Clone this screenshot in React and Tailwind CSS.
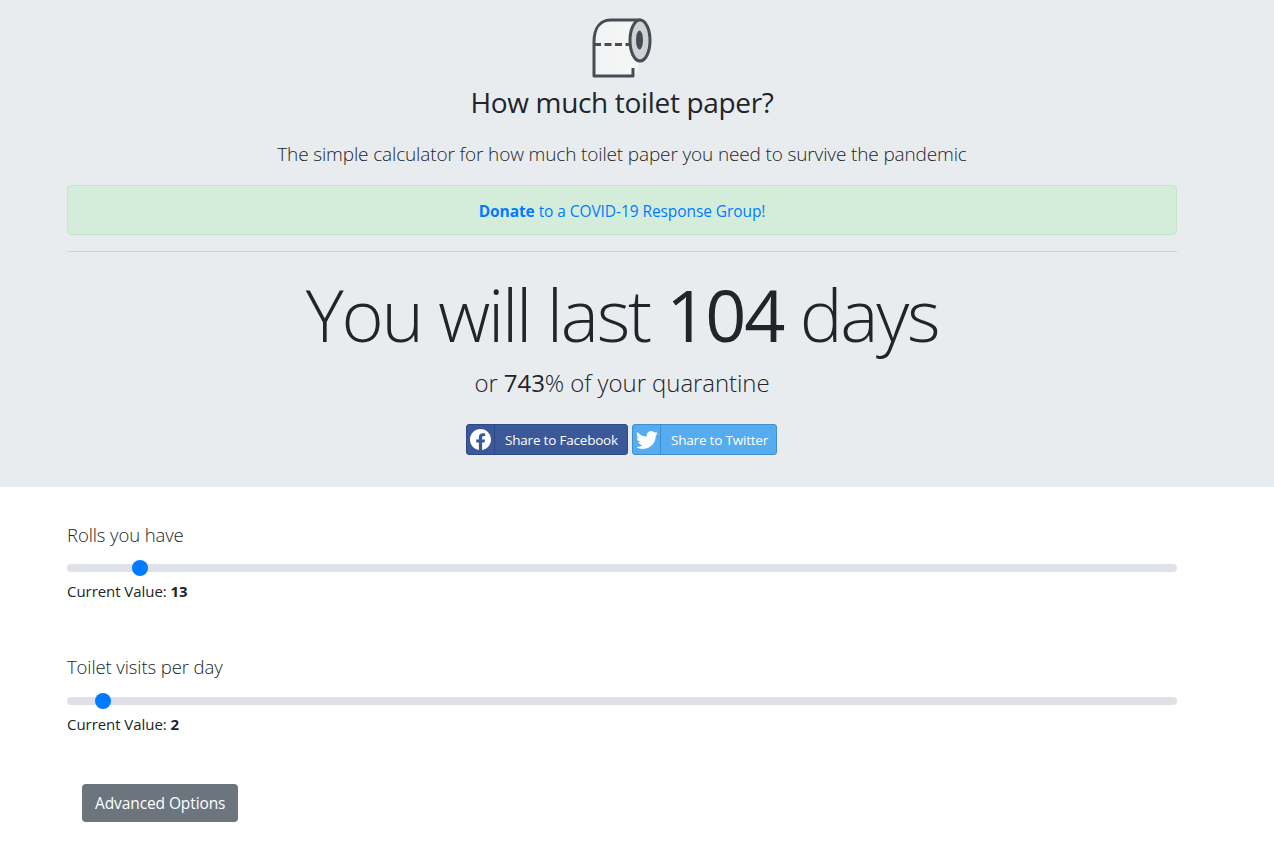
import React from "react";

function Roll() {
  return (
    <svg width="62" height="62" viewBox="0 0 62 62" fill="none" className="block">
      <defs>
        <linearGradient id="paper" x1="0" y1="0" x2="1" y2="0">
          <stop offset="0" stopColor="#f1f2f3" />
          <stop offset="1" stopColor="#f7f7f8" />
        </linearGradient>
      </defs>
      <path d="M3 58V24C3 9 10 2 20 2H48C53 2 49 58 43 58Z" fill="url(#paper)" />
      <path d="M3 40V24C3 9 10 2 20 2H50M42 50V58H3V40" stroke="#464c52" strokeWidth="3" strokeLinejoin="round" />
      <path d="M3 26.5H40" stroke="#464c52" strokeWidth="3" strokeDasharray="7 3.5" />
      <ellipse cx="49" cy="22.5" rx="10" ry="20.5" fill="#cfd2d4" stroke="#464c52" strokeWidth="3" />
      <ellipse cx="48.5" cy="22" rx="3.5" ry="9.5" fill="#464c52" />
    </svg>
  );
}

function Slider({ label, value, pos, second }) {
  return (
    <div className="h-[132px]">
      <div className="text-[18.5px] leading-[27px] font-light tracking-[-0.1px] text-[#212529]">{label}</div>
      <div className={second ? "relative mt-[17px] h-2 w-full rounded-full bg-[#dee2e6]" : "relative mt-[16px] h-2 w-full rounded-full bg-[#dee2e6]"}>
        <div className="absolute top-[-4px] h-4 w-4 rounded-full bg-[#007bff]" style={{ left: pos }} />
      </div>
      <div className="mt-[9px] text-[15px] leading-[21px] tracking-[-0.05px] text-[#212529]">
        Current Value: <b className="font-bold">{value}</b>
      </div>
    </div>
  );
}

export default function App() {
  return (
    <div className="min-h-[849px] bg-white font-['Open_Sans','Noto_Sans',sans-serif] text-[#212529]">
      <div className="h-[487px] bg-[#e9ecef] pl-[67px]">
        <div className="flex w-[1110px] flex-col items-center">
          <div className="mt-[18px]"><Roll /></div>
          <h1 className="mt-[5px] text-[28px] leading-[34px] font-normal tracking-[-0.33px]">How much toilet paper?</h1>
          <p className="mt-[22px] text-[19px] leading-[27px] font-light tracking-[-0.14px] text-[#212529]">
            The simple calculator for how much toilet paper you need to survive the pandemic
          </p>
          <div className="mt-[17px] flex h-[50px] w-full items-center justify-center rounded border border-[#c3e6cb] bg-[#d4edda] pt-[3px] text-[15.5px] tracking-[-0.08px] text-[#007bff]">
            <span><b className="font-bold">Donate</b> to a COVID-19 Response Group!</span>
          </div>
          <div className="mt-[16px] w-full border-t border-[#d1d4d7]" />
          <div className="mt-[19px] text-[72px] leading-[86px] font-light tracking-[-2.22px]">
            You will last <b className="font-medium">104</b> days
          </div>
          <div className="mt-[8px] text-[24px] leading-[36px] font-light tracking-[-0.07px]">
            or <span className="font-normal">743</span>% of your quarantine
          </div>
          <div className="mt-[23px] mr-px flex gap-1 text-[13.5px] tracking-[-0.2px] text-white">
            <div className="flex h-[31px] w-[162px] items-center rounded-[3px] border border-[#2f4a86] bg-[#3b5998]">
              <div className="flex h-full w-[28px] items-center justify-center border-r border-[#2f4a86]">
                <svg width="21" height="21" viewBox="0 0 24 24" fill="#fff"><path d="M24 12.07C24 5.4 18.63 0 12 0S0 5.4 0 12.07c0 6.03 4.39 11.02 10.13 11.93v-8.44H7.08v-3.49h3.05V9.41c0-3.02 1.79-4.69 4.53-4.69 1.31 0 2.69.24 2.69.24v2.97h-1.52c-1.49 0-1.96.93-1.96 1.89v2.25h3.33l-.53 3.49h-2.8V24C19.61 23.09 24 18.1 24 12.07Z" /></svg>
              </div>
              <span className="mt-px ml-[10px]">Share to Facebook</span>
            </div>
            <div className="flex h-[31px] w-[145px] items-center rounded-[3px] border border-[#3f8fd0] bg-[#55acee]">
              <div className="flex h-full w-[28px] items-center justify-center border-r border-[#3f8fd0]">
                <svg width="22" height="22" viewBox="0 0 24 24" fill="#fff"><path d="M23.95 4.57a10 10 0 0 1-2.82.77 4.96 4.96 0 0 0 2.16-2.72 9.9 9.9 0 0 1-3.12 1.19 4.92 4.92 0 0 0-8.38 4.48A13.98 13.98 0 0 1 1.64 3.16a4.92 4.92 0 0 0 1.52 6.57 4.9 4.9 0 0 1-2.23-.62v.06a4.92 4.92 0 0 0 3.95 4.83 5 5 0 0 1-2.21.08 4.94 4.94 0 0 0 4.6 3.42A9.87 9.87 0 0 1 0 19.54a14 14 0 0 0 7.56 2.21c9.05 0 14-7.5 14-13.98 0-.21 0-.42-.02-.63a10 10 0 0 0 2.41-2.57Z" /></svg>
              </div>
              <span className="mt-px ml-[10px]">Share to Twitter</span>
            </div>
          </div>
        </div>
      </div>
      <div className="w-[1177px] pl-[67px] pt-[34px]">
        <Slider label="Rolls you have" value="13" pos="65px" />
        <Slider label="Toilet visits per day" value="2" pos="28px" second />
        <button className="mt-[-1px] ml-[15px] h-[38px] rounded bg-[#6c757d] px-[13px] pt-px text-[15.5px] tracking-[-0.1px] text-white">
          Advanced Options
        </button>
      </div>
    </div>
  );
}
